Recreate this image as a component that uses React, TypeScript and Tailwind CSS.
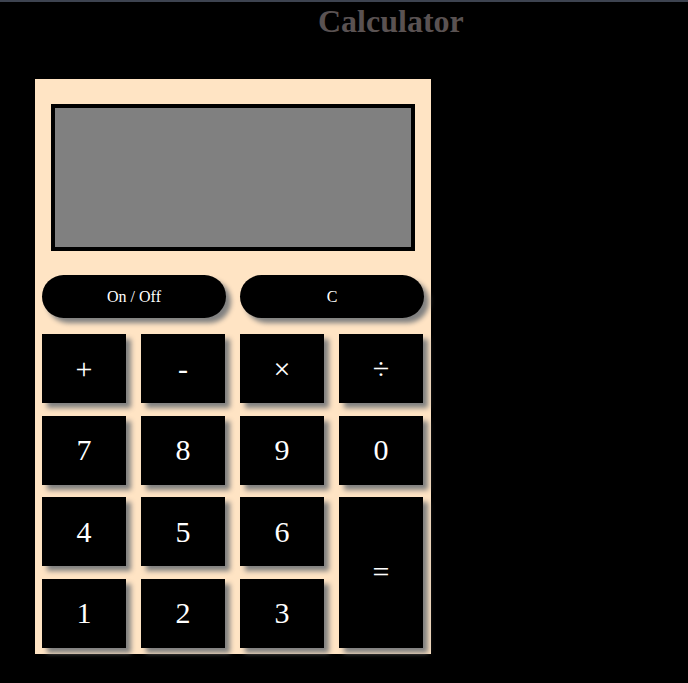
import * as React from "react";

const serif = { fontFamily: '"Liberation Serif", "Times New Roman", serif' };

const keys = ["+", "-", "×", "÷", "7", "8", "9", "0", "4", "5", "6"];
const lastRow = ["1", "2", "3"];

function Key({ children, tall }: { children: React.ReactNode; tall?: boolean }) {
  return (
    <button
      className={`bg-black text-white text-[30px] leading-none shadow-[5px_5px_5px_#808080] flex items-center justify-center ${
        tall ? "row-span-2" : "h-[69px]"
      }`}
    >
      {children}
    </button>
  );
}

function App() {
  return (
    <div className="min-h-[683px] bg-black" style={serif}>
      <div className="h-[2px] bg-[#3d4350]" />
      <h1 className="pl-[318px] pt-[1px] text-[32px] font-bold leading-[36px] text-[#5a5252]">
        Calculator
      </h1>
      <div className="ml-[35px] mt-[40px] w-[396px] bg-[#ffe4c4] px-[7px] pt-[25px] pb-[6px]">
        <div className="mx-[9px] h-[147px] border-4 border-black bg-[#808080]" />
        <div className="mt-[24px] grid grid-cols-2 gap-[14px]">
          <button className="h-[43px] rounded-[22px] bg-black text-white text-[16px] shadow-[5px_5px_5px_#808080]">
            On / Off
          </button>
          <button className="h-[43px] rounded-[22px] bg-black text-white text-[16px] shadow-[5px_5px_5px_#808080]">
            C
          </button>
        </div>
        <div className="mt-[16px] grid grid-cols-[repeat(4,84px)] gap-x-[15px] gap-y-[12.5px]">
          {keys.map((k) => (
            <Key key={k}>{k}</Key>
          ))}
          <Key tall>=</Key>
          {lastRow.map((k) => (
            <Key key={k}>{k}</Key>
          ))}
        </div>
      </div>
    </div>
  );
}

export default App;
